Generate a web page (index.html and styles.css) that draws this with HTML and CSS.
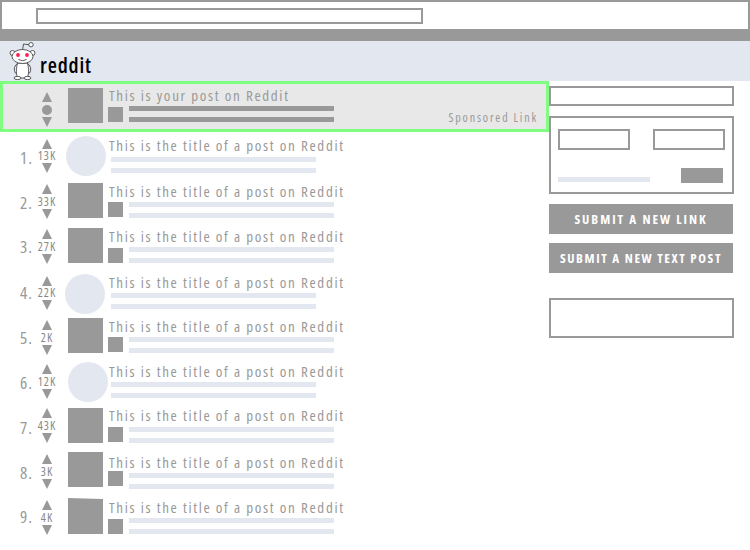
FILE: index.html
```html
<!DOCTYPE html>
<html lang="en">
<head>
<meta charset="utf-8">
<title>Reddit wireframe</title>
<link rel="stylesheet" href="styles.css">
</head>
<body>
<div class="chrome"><div class="address"></div></div>
<header class="site-header">
  <svg class="snoo" width="30" height="38" viewBox="0 0 30 38">
    <g fill="#fff" stroke="#333" stroke-width="0.8">
      <path d="M14.500 8 L15.500 2 L21 2.700" fill="none"/>
      <circle cx="23" cy="2.700" r="2.200"/>
      <circle cx="4.500" cy="11" r="2.500"/>
      <circle cx="24.500" cy="11" r="2.500"/>
      <path d="M9 22 C5.500 24 5.500 30 8.500 32 M20 22 C23.500 24 23.500 30 20.500 32" fill="none"/>
      <path d="M9.500 21 H19.500 C21 27 21 33 19 36 H10 C8 33 8 27 9.500 21 Z"/>
      <ellipse cx="9.500" cy="36" rx="3.500" ry="1.600"/>
      <ellipse cx="19.500" cy="36" rx="3.500" ry="1.600"/>
      <ellipse cx="14.500" cy="14.500" rx="10.500" ry="7"/>
    </g>
    <circle cx="10" cy="13" r="1.900" fill="#ff1f4f"/>
    <circle cx="19" cy="13" r="1.900" fill="#ff1f4f"/>
    <path d="M10.500 17.500 Q14.500 20 18.500 17.500" fill="none" stroke="#333" stroke-width="0.8"/>
  </svg>
  <span class="wordmark">reddit</span>
</header>
<div class="page">
  <main class="listing">
    <article class="post promoted">
      <div class="vote"><i class="up"></i><b class="dot"></b><i class="down"></i></div>
      <div class="thumb"><div class="square"></div></div>
      <div class="body">
        <div class="title">This is your post on Reddit</div>
        <div class="meta"><div class="mini"></div><div class="bars"><div class="bar dark"></div><div class="bar dark"></div></div></div>
      </div>
      <span class="sponsored">Sponsored Link</span>
    </article>
    <article class="post r1">
      <div class="rank">1.</div>
      <div class="vote"><i class="up"></i><span class="score">13K</span><i class="down"></i></div>
      <div class="thumb"><div class="circle"></div></div>
      <div class="body"><div class="title">This is the title of a post on Reddit</div>
        <div class="meta flat"><div class="bars"><div class="bar"></div><div class="bar"></div></div></div></div>
    </article>
    <article class="post r2">
      <div class="rank">2.</div>
      <div class="vote"><i class="up"></i><span class="score">33K</span><i class="down"></i></div>
      <div class="thumb"><div class="square"></div></div>
      <div class="body"><div class="title">This is the title of a post on Reddit</div>
        <div class="meta"><div class="mini"></div><div class="bars"><div class="bar"></div><div class="bar"></div></div></div></div>
    </article>
    <article class="post r3">
      <div class="rank">3.</div>
      <div class="vote"><i class="up"></i><span class="score">27K</span><i class="down"></i></div>
      <div class="thumb"><div class="square"></div></div>
      <div class="body"><div class="title">This is the title of a post on Reddit</div>
        <div class="meta"><div class="mini"></div><div class="bars"><div class="bar"></div><div class="bar"></div></div></div></div>
    </article>
    <article class="post r4">
      <div class="rank">4.</div>
      <div class="vote"><i class="up"></i><span class="score">22K</span><i class="down"></i></div>
      <div class="thumb"><div class="circle"></div></div>
      <div class="body"><div class="title">This is the title of a post on Reddit</div>
        <div class="meta flat"><div class="bars"><div class="bar"></div><div class="bar"></div></div></div></div>
    </article>
    <article class="post r5">
      <div class="rank">5.</div>
      <div class="vote"><i class="up"></i><span class="score">2K</span><i class="down"></i></div>
      <div class="thumb"><div class="square"></div></div>
      <div class="body"><div class="title">This is the title of a post on Reddit</div>
        <div class="meta"><div class="mini"></div><div class="bars"><div class="bar"></div><div class="bar"></div></div></div></div>
    </article>
    <article class="post r6">
      <div class="rank">6.</div>
      <div class="vote"><i class="up"></i><span class="score">12K</span><i class="down"></i></div>
      <div class="thumb"><div class="circle"></div></div>
      <div class="body"><div class="title">This is the title of a post on Reddit</div>
        <div class="meta flat"><div class="bars"><div class="bar"></div><div class="bar"></div></div></div></div>
    </article>
    <article class="post r7">
      <div class="rank">7.</div>
      <div class="vote"><i class="up"></i><span class="score">43K</span><i class="down"></i></div>
      <div class="thumb"><div class="square"></div></div>
      <div class="body"><div class="title">This is the title of a post on Reddit</div>
        <div class="meta"><div class="mini"></div><div class="bars"><div class="bar"></div><div class="bar"></div></div></div></div>
    </article>
    <article class="post r8">
      <div class="rank">8.</div>
      <div class="vote"><i class="up"></i><span class="score">3K</span><i class="down"></i></div>
      <div class="thumb"><div class="square"></div></div>
      <div class="body"><div class="title">This is the title of a post on Reddit</div>
        <div class="meta"><div class="mini"></div><div class="bars"><div class="bar"></div><div class="bar"></div></div></div></div>
    </article>
    <article class="post r9">
      <div class="rank">9.</div>
      <div class="vote"><i class="up"></i><span class="score">4K</span><i class="down"></i></div>
      <div class="thumb"><div class="square"></div></div>
      <div class="body"><div class="title">This is the title of a post on Reddit</div>
        <div class="meta"><div class="mini"></div><div class="bars"><div class="bar"></div><div class="bar"></div></div></div></div>
    </article>
  </main>
  <aside class="side">
    <div class="box search"></div>
    <div class="box login">
      <div class="fields"><div class="box field"></div><div class="box field"></div></div>
      <div class="login-foot"><div class="remember"></div><div class="go"></div></div>
    </div>
    <a class="cta first">SUBMIT A NEW LINK</a>
    <a class="cta second">SUBMIT A NEW TEXT POST</a>
    <div class="box promo"></div>
  </aside>
</div>
</body>
</html>
```
FILE: styles.css
```css
* { box-sizing: border-box; }
html, body { margin: 0; padding: 0; }
body {
  width: 750px;
  height: 550px;
  overflow: hidden;
  background: #fff;
  font-family: "Open Sans", "Noto Sans", sans-serif;
  font-stretch: 75%;
  color: #999;
}
.chrome {
  height: 41px;
  border: 2px solid #999;
  border-bottom-width: 12px;
  padding: 6px 0 0 34px;
}
.address { width: 387px; height: 16px; border: 2px solid #999; }
.site-header {
  height: 40px;
  background: #e3e7f0;
  display: flex;
  align-items: flex-start;
  padding-left: 8px;
}
.snoo { margin-top: 1px; flex: none; }
.wordmark {
  margin: 11px 0 0 2px;
  font-size: 21px;
  line-height: 26px;
  font-weight: 600;
  color: #000;
  letter-spacing: 0.85px;
  opacity: .999;
}
.page { display: flex; align-items: flex-start; }
.listing { width: 549px; flex: none; }
.post { display: flex; position: relative; align-items: flex-start; height: 35px; }
.promoted {
  height: 51px;
  border: 3px solid #7fff7f;
  background: #e8e8e8;
  padding-top: 4px;
  padding-left: 30px;
}
.rank {
  width: 33px;
  flex: none;
  margin-top: 11px;
  text-align: right;
  font-size: 17px;
  font-weight: 500;
  line-height: 18px;
  letter-spacing: 1px;
  opacity: .999;
}
.vote {
  width: 28px;
  flex: none;
  margin-top: 1px;
  display: flex;
  flex-direction: column;
  align-items: center;
  height: 35px;
  justify-content: space-between;
}
.up, .down { display: block; width: 0; height: 0; border-left: 5px solid transparent; border-right: 5px solid transparent; }
.up { border-bottom: 10px solid #999; }
.down { border-top: 10px solid #999; }
.dot { width: 10px; height: 10px; border-radius: 50%; background: #999; display: block; }
.score { font-size: 12px; line-height: 12px; letter-spacing: 1px; color: #888; opacity: .999; }
.thumb { width: 47px; padding-left: 7px; flex: none; display: flex; }
.square { width: 35px; height: 35px; background: #999; }
.circle { width: 40px; height: 40px; border-radius: 50%; background: #e3e7f0; margin-left: -2px; }
.body { width: 240px; flex: none; }
.title {
  font-size: 15px;
  font-weight: 500;
  line-height: 18px;
  letter-spacing: 1.68px;
  white-space: nowrap;
  margin: -1px 0 0 1px;
  opacity: .999;
}
.meta { display: flex; align-items: flex-start; gap: 6px; margin-top: 2px; }
.mini { width: 15px; height: 15px; background: #999; flex: none; }
.bars { display: flex; flex-direction: column; gap: 6px; }
.flat { margin-left: 3px; }
.bar { width: 205px; height: 5px; background: #e3e7f0; }
.bar.dark { background: #999; }
.promoted .vote { margin-top: 4px; }
.promoted .body { margin-top: -1px; }
.promoted .mini { margin-top: 1px; }
.sponsored {
  position: absolute;
  right: 8px;
  bottom: 3px;
  font-size: 12px;
  line-height: 16px;
  letter-spacing: 1.85px;
  opacity: .999;
}
.r1, .r4, .r6 { height: 40px; }
.r9 { height: 36px; }
.r1 { margin-top: 4px; }
.r2 { margin-top: 7px; }
.r3 { margin-top: 10px; }
.r4 { margin-top: 11px; }
.r5 { margin-top: 4px; }
.r6 { margin-top: 9px; }
.r7 { margin-top: 6px; }
.r8 { margin-top: 9px; }
.r9 { margin-top: 11px; }
.r1 .rank { margin-top: 13px; }
.r3 .rank, .r4 .rank, .r9 .rank { margin-top: 10px; }
.r6 .rank, .r8 .rank { margin-top: 12px; }
.r1 .vote { margin-top: 3px; height: 34px; }
.r4 .vote { margin-top: 2px; height: 34px; }
.r5 .vote, .r6 .vote, .r8 .vote, .r9 .vote { margin-top: 2px; }
.r7 .vote { margin-top: 0; }
.r4 .circle { margin-left: -3px; }
.r6 .circle { margin-left: 0; }
.r9 .square { height: 36px; clip-path: polygon(0 0, 100% 3%, 100% 100%, 0 100%); }
.r1 .body, .r6 .body, .r9 .body { margin-top: 1px; }
.r8 .body { margin-top: 2px; }
.r7 .body { margin-top: -1px; }
.r1 .meta, .r7 .meta { margin-top: 3px; }
.r3 .mini, .r9 .mini { margin-top: 1px; }
.r8 .mini { margin-top: -2px; }
.side { width: 185px; margin-top: 5px; flex: none; }
.box { border: 2px solid #999; background: #fff; }
.search { height: 20px; margin-bottom: 10px; }
.login { height: 78px; padding: 11px 7px 0; }
.fields { display: flex; justify-content: space-between; }
.field { width: 72px; height: 21px; }
.login-foot { position: relative; height: 33px; }
.remember { position: absolute; left: 0; top: 27px; width: 92px; height: 5px; background: #e3e7f0; }
.go { position: absolute; right: 2px; top: 18px; width: 42px; height: 15px; background: #999; }
.cta {
  display: block;
  width: 184px;
  height: 30px;
  margin-top: 9px;
  background: #999;
  color: #fff;
  font-size: 13px;
  font-weight: 700;
  line-height: 30px;
  text-align: center;
  white-space: nowrap;
}
.first { margin-top: 10px; letter-spacing: 1.95px; }
.second { letter-spacing: 1.6px; }
.promo { height: 40px; margin-top: 25px; }
```
